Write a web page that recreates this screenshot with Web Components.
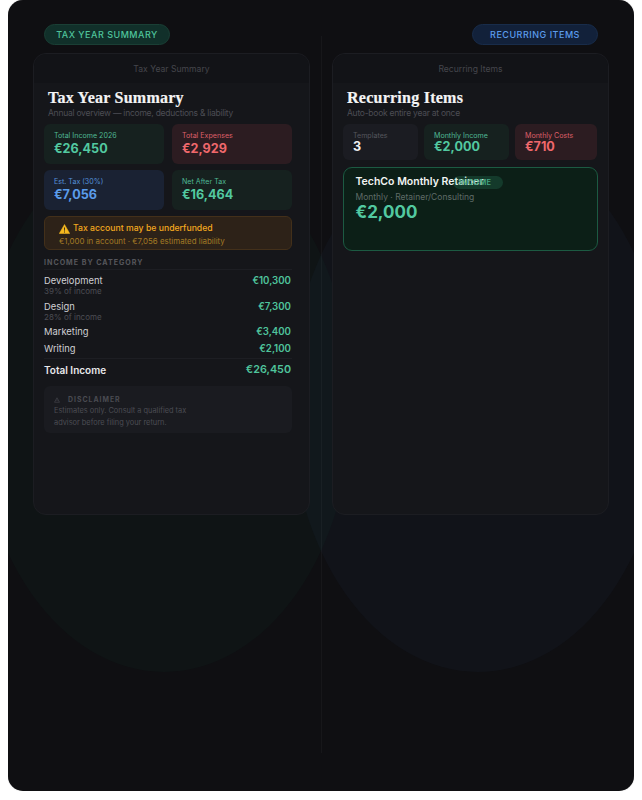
<!DOCTYPE html>
<html>
<head>
<meta charset="utf-8">
<title>Tax Year Summary</title>
<style>
  html { background: #fff; overflow: hidden; }
  body { margin: 0 8px; font-family: Inter, "Liberation Sans", sans-serif; }
</style>
</head>
<body>
<app-frame>
  <app-column slot="left" tone="green" pill="TAX YEAR SUMMARY" heading="Tax Year Summary" sub="Annual overview — income, deductions &amp; liability">
    <stat-grid cols="120px 120px" gap="6px 8px">
      <stat-card tone="green" label="Total Income 2026" value="€26,450" h="40"></stat-card>
      <stat-card tone="red" label="Total Expenses" value="€2,929" h="40"></stat-card>
      <stat-card tone="blue" label="Est. Tax (30%)" value="€7,056" h="40"></stat-card>
      <stat-card tone="green" label="Net After Tax" value="€16,464" h="40"></stat-card>
    </stat-grid>
    <tax-alert heading="Tax account may be underfunded" detail="€1,000 in account · €7,056 estimated liability"></tax-alert>
    <category-list heading="INCOME BY CATEGORY">
      <category-row name="Development" note="39% of income" amount="€10,300"></category-row>
      <category-row name="Design" note="28% of income" amount="€7,300"></category-row>
      <category-row name="Marketing" amount="€3,400"></category-row>
      <category-row name="Writing" amount="€2,100"></category-row>
      <category-row slot="total" total name="Total Income" amount="€26,450"></category-row>
    </category-list>
    <tax-disclaimer>Estimates only. Consult a qualified tax<br>advisor before filing your return.</tax-disclaimer>
  </app-column>
  <app-column slot="right" tone="blue" pill="RECURRING ITEMS" heading="Recurring Items" sub="Auto-book entire year at once">
    <stat-grid cols="75px 85px 82px" gap="6px">
      <stat-card tone="plain" label="Templates" value="3" h="36"></stat-card>
      <stat-card tone="green" label="Monthly Income" value="€2,000" h="36"></stat-card>
      <stat-card tone="red" label="Monthly Costs" value="€710" h="36"></stat-card>
    </stat-grid>
    <template-card heading="TechCo Monthly Retainer" detail="Monthly · Retainer/Consulting" amount="€2,000" tag="INCOME"></template-card>
  </app-column>
</app-frame>

<script>
const TONES = {
  green: { bg: "#16211f", label: "#4fb894", value: "#52c9a0" },
  red: { bg: "#2c1c21", label: "#dc5f68", value: "#f0686c" },
  blue: { bg: "#1a2233", label: "#5590d8", value: "#5a9cea" },
  plain: { bg: "#1b1c22", label: "#55565d", value: "#f2f2f4" },
};

class AppFrame extends HTMLElement {
  constructor() {
    super();
    this.attachShadow({ mode: "open" });
  }

  connectedCallback() {
    this.shadowRoot.innerHTML = `
            <style>
                :host {
                    display: block;
                    position: relative;
                    height: 791px;
                    border-radius: 15px;
                    background: #0f0f12;
                    box-shadow: 0 0 1px rgba(0, 0, 0, 0.5);
                }
                .glow {
                    position: absolute;
                    top: 134px;
                    width: 376px;
                    height: 538px;
                    border-radius: 50%;
                }
                .glow.green {
                    left: -32px;
                    background: rgba(52, 211, 153, 0.028);
                }
                .glow.blue {
                    right: -32px;
                    background: rgba(96, 165, 250, 0.03);
                }
                .rule {
                    position: absolute;
                    left: 313px;
                    top: 36px;
                    width: 1px;
                    height: 717px;
                    background: rgba(255, 255, 255, 0.035);
                }
                .cols {
                    position: relative;
                    display: grid;
                    grid-template-columns: 1fr 1fr;
                }
            </style>
            <div class="glow green"></div>
            <div class="glow blue"></div>
            <div class="rule"></div>
            <div class="cols">
                <slot name="left"></slot>
                <slot name="right"></slot>
            </div>
        `;
  }
}
customElements.define("app-frame", AppFrame);

class AppColumn extends HTMLElement {
  constructor() {
    super();
    this.attachShadow({ mode: "open" });
  }

  connectedCallback() {
    const blue = this.getAttribute("tone") === "blue";
    const heading = this.getAttribute("heading");
    this.shadowRoot.innerHTML = `
            <style>
                :host {
                    display: flex;
                    flex-direction: column;
                    padding: 24px ${blue ? "25px" : "11px"} 0 ${blue ? "11px" : "25px"};
                }
                .pill {
                    align-self: ${blue ? "flex-end" : "flex-start"};
                    margin: 0 11px 8px;
                    width: 126px;
                    height: 21px;
                    box-sizing: border-box;
                    display: flex;
                    align-items: center;
                    justify-content: center;
                    border-radius: 11px;
                    border: 1px solid ${blue ? "#182c4a" : "#1a3f35"};
                    background: ${blue ? "#12213a" : "#11302a"};
                    color: ${blue ? "#5b9bec" : "#4fc49c"};
                    font-size: 9px;
                    font-weight: 500;
                    letter-spacing: 0.5px;
                    white-space: nowrap;
                }
                .panel {
                    height: 462px;
                    box-sizing: border-box;
                    border: 1px solid #1c1d22;
                    border-radius: 13px;
                    background: #15161a;
                    overflow: hidden;
                }
                .bar {
                    height: 29px;
                    display: flex;
                    align-items: center;
                    justify-content: center;
                    background: #121317;
                    color: #45464c;
                    font-size: 8.6px;
                }
                .body {
                    padding: 6px ${blue ? "10px" : "17px"} 0 10px;
                }
                h2 {
                    margin: 0;
                    padding-left: 4px;
                    font-family: "Liberation Serif", serif;
                    font-size: 16px;
                    font-weight: 700;
                    line-height: 18px;
                    letter-spacing: 0.25px;
                    -webkit-text-stroke: 0.2px #f4f4f5;
                    color: #f4f4f5;
                }
                p {
                    margin: 0 0 5px;
                    padding-left: 4px;
                    font-size: 8.5px;
                    line-height: 12px;
                    letter-spacing: -0.25px;
                    color: #4c4d54;
                    white-space: nowrap;
                }
            </style>
            <div class="pill">${this.getAttribute("pill")}</div>
            <div class="panel">
                <div class="bar">${heading}</div>
                <div class="body">
                    <h2>${heading}</h2>
                    <p>${this.getAttribute("sub").replace("&", "&amp;")}</p>
                    <slot></slot>
                </div>
            </div>
        `;
  }
}
customElements.define("app-column", AppColumn);

class StatGrid extends HTMLElement {
  constructor() {
    super();
    this.attachShadow({ mode: "open" });
  }

  connectedCallback() {
    this.shadowRoot.innerHTML = `
            <style>
                :host {
                    display: grid;
                    grid-template-columns: ${this.getAttribute("cols")};
                    gap: ${this.getAttribute("gap")};
                }
            </style>
            <slot></slot>
        `;
  }
}
customElements.define("stat-grid", StatGrid);

class StatCard extends HTMLElement {
  constructor() {
    super();
    this.attachShadow({ mode: "open" });
  }

  connectedCallback() {
    const tone = TONES[this.getAttribute("tone")];
    const h = Number(this.getAttribute("h"));
    this.shadowRoot.innerHTML = `
            <style>
                :host {
                    display: block;
                    box-sizing: border-box;
                    height: ${h}px;
                    padding: 7px 9px 0 10px;
                    border-radius: 6px;
                    background: ${tone.bg};
                }
                .label {
                    font-size: 7.1px;
                    line-height: 10px;
                    color: ${tone.label};
                    white-space: nowrap;
                }
                .value {
                    font-size: 12.6px;
                    font-weight: 700;
                    line-height: 15px;
                    margin-top: ${h < 40 ? "-2px" : "0"};
                    color: ${tone.value};
                }
            </style>
            <div class="label">${this.getAttribute("label")}</div>
            <div class="value">${this.getAttribute("value")}</div>
        `;
  }
}
customElements.define("stat-card", StatCard);

class TaxAlert extends HTMLElement {
  constructor() {
    super();
    this.attachShadow({ mode: "open" });
  }

  connectedCallback() {
    this.shadowRoot.innerHTML = `
            <style>
                :host {
                    display: block;
                    box-sizing: border-box;
                    height: 34px;
                    margin-top: 6px;
                    padding: 5px 14px 0;
                    border: 1px solid #43301a;
                    border-radius: 6px;
                    background: #2d2218;
                }
                .head {
                    display: flex;
                    align-items: center;
                    gap: 3px;
                    font-size: 8.7px;
                    font-weight: 500;
                    line-height: 13px;
                    color: #f4a91f;
                    white-space: nowrap;
                }
                svg {
                    width: 11px;
                    height: 10px;
                    flex: none;
                }
                .detail {
                    font-size: 7.9px;
                    line-height: 11px;
                    margin-top: 1px;
                    color: #a37a25;
                    white-space: nowrap;
                }
            </style>
            <div class="head">
                <svg viewBox="0 0 22 20"><path d="M11 1 21.5 19H.5Z" fill="#f5b81f" stroke="#f5b81f" stroke-linejoin="round"/><path d="M10 7h2l-.3 6.5h-1.400ZM10 15h2v2h-2Z" fill="#2d2218"/></svg>
                ${this.getAttribute("heading")}
            </div>
            <div class="detail">${this.getAttribute("detail")}</div>
        `;
  }
}
customElements.define("tax-alert", TaxAlert);

class CategoryList extends HTMLElement {
  constructor() {
    super();
    this.attachShadow({ mode: "open" });
  }

  connectedCallback() {
    this.shadowRoot.innerHTML = `
            <style>
                :host {
                    display: block;
                    margin-top: 7px;
                }
                .title {
                    height: 11px;
                    padding-bottom: 1px;
                    border-bottom: 1px solid #1d1e23;
                    font-size: 7.1px;
                    font-weight: 700;
                    line-height: 11px;
                    letter-spacing: 1px;
                    color: #55565c;
                }
                .rows {
                    display: flex;
                    flex-direction: column;
                    gap: 4px;
                    padding: 4px 0 2.5px;
                }
                .total {
                    border-top: 1px solid #1d1e23;
                    padding-top: 4px;
                }
            </style>
            <div class="title">${this.getAttribute("heading")}</div>
            <div class="rows"><slot></slot></div>
            <div class="total"><slot name="total"></slot></div>
        `;
  }
}
customElements.define("category-list", CategoryList);

class CategoryRow extends HTMLElement {
  constructor() {
    super();
    this.attachShadow({ mode: "open" });
  }

  connectedCallback() {
    const total = this.hasAttribute("total");
    const note = this.getAttribute("note");
    this.shadowRoot.innerHTML = `
            <style>
                :host {
                    display: flex;
                    justify-content: space-between;
                    align-items: flex-start;
                    padding-right: 1px;
                }
                .name {
                    font-size: ${total ? "10px" : "9.4px"};
                    font-weight: ${total ? 600 : 400};
                    line-height: ${note || total ? "14px" : "13px"};
                    color: ${total ? "#e8e8ea" : "#d0d0d4"};
                }
                .note {
                    font-size: 8px;
                    line-height: 7.5px;
                    color: #4c4d54;
                }
                .amount {
                    font-size: ${total ? "10.8px" : "9.7px"};
                    font-weight: 600;
                    line-height: ${note || total ? "14px" : "13px"};
                    color: #4fc49c;
                }
            </style>
            <div>
                <div class="name">${this.getAttribute("name")}</div>
                ${note ? `<div class="note">${note}</div>` : ""}
            </div>
            <div class="amount">${this.getAttribute("amount")}</div>
        `;
  }
}
customElements.define("category-row", CategoryRow);

class TaxDisclaimer extends HTMLElement {
  constructor() {
    super();
    this.attachShadow({ mode: "open" });
  }

  connectedCallback() {
    this.shadowRoot.innerHTML = `
            <style>
                :host {
                    display: block;
                    box-sizing: border-box;
                    height: 47px;
                    margin-top: 9px;
                    padding: 9px 10px 0;
                    border-radius: 6px;
                    background: #1a1b20;
                }
                .head {
                    display: flex;
                    align-items: center;
                    gap: 8px;
                    font-size: 6.9px;
                    font-weight: 700;
                    line-height: 10px;
                    letter-spacing: 1px;
                    color: #4a4b52;
                }
                svg {
                    width: 6px;
                    height: 6px;
                }
                .text {
                    font-size: 7.4px;
                    line-height: 12px;
                    color: #4b4c53;
                }
            </style>
            <div class="head">
                <svg viewBox="0 0 12 12" fill="none" stroke="#4a4b52" stroke-width="1.200"><path d="M6 1.500 11 10.500H1Z"/><path d="M6 5v3"/></svg>
                DISCLAIMER
            </div>
            <div class="text"><slot></slot></div>
        `;
  }
}
customElements.define("tax-disclaimer", TaxDisclaimer);

class TemplateCard extends HTMLElement {
  constructor() {
    super();
    this.attachShadow({ mode: "open" });
  }

  connectedCallback() {
    this.shadowRoot.innerHTML = `
            <style>
                :host {
                    display: block;
                    position: relative;
                    box-sizing: border-box;
                    height: 84px;
                    margin-top: 7px;
                    padding: 6.500px 11.500px 0;
                    border: 1.500px solid #1c5a42;
                    border-radius: 9px;
                    background: #0c1f17;
                }
                .title {
                    font-size: 10.5px;
                    font-weight: 600;
                    line-height: 14px;
                    color: #f2f4f3;
                    white-space: nowrap;
                }
                .detail {
                    font-size: 8.5px;
                    line-height: 12px;
                    margin-top: 2px;
                    color: #5f6b67;
                }
                .amount {
                    font-size: 17px;
                    font-weight: 700;
                    line-height: 17px;
                    margin-top: 1px;
                    color: #52c9a0;
                }
                .tag {
                    position: absolute;
                    left: 108.500px;
                    top: 7.500px;
                    width: 50px;
                    height: 13px;
                    box-sizing: border-box;
                    padding-right: 11px;
                    border-radius: 7px;
                    background: rgba(60, 200, 150, 0.16);
                    color: #44a884;
                    font-size: 7.4px;
                    font-weight: 600;
                    line-height: 13px;
                    letter-spacing: 0.4px;
                    text-align: right;
                }
            </style>
            <div class="title">${this.getAttribute("heading")}</div>
            <div class="detail">${this.getAttribute("detail")}</div>
            <div class="amount">${this.getAttribute("amount")}</div>
            <div class="tag">${this.getAttribute("tag")}</div>
        `;
  }
}
customElements.define("template-card", TemplateCard);
</script>
</body>
</html>
